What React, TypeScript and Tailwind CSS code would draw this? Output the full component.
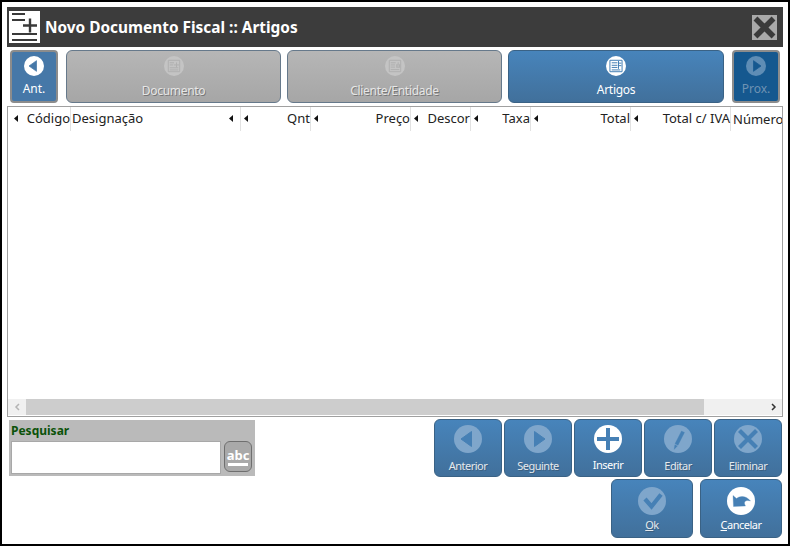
import type { ReactNode } from 'react'

const font = 'font-["Noto_Sans","Liberation_Sans",sans-serif]'

const columns = [
  { label: 'Código', width: 'w-[60px]' },
  { label: 'Designação', width: 'w-[170px]', left: true },
  { label: 'Qnt', width: 'w-[70px]' },
  { label: 'Preço', width: 'w-[100px]' },
  { label: 'Descor', width: 'w-[60px]' },
  { label: 'Taxa', width: 'w-[60px]' },
  { label: 'Total', width: 'w-[100px]' },
  { label: 'Total c/ IVA', width: 'w-[100px]' },
]

function Arrow({ className = '' }: { className?: string }) {
  return (
    <svg width="4" height="7" viewBox="0 0 4 7" className={`shrink-0 ${className}`}>
      <path d="M4 0v7L0 3.5z" fill="#111" />
    </svg>
  )
}

function Round({ size, fg, bg, children }: { size: number; fg: string; bg: string; children: ReactNode }) {
  return (
    <svg width={size} height={size} viewBox="0 0 28 28" className="shrink-0">
      <circle cx="14" cy="14" r="14" fill={fg} />
      <g fill={bg} stroke={bg}>{children}</g>
    </svg>
  )
}

const prev = <path d="M17.5 6.5v15L7 14z" strokeWidth="1" strokeLinejoin="round" />
const next = <path d="M10.5 6.5v15L21 14z" strokeWidth="1" strokeLinejoin="round" />
const plus = <path d="M14 3v22M3 14h22" strokeWidth="4" fill="none" />
const pencil = (
  <g>
    <path d="M17.500 6l3 1.400-6.500 12.800-3-1.400z" strokeWidth="0.3" />
    <path d="M10.800 19.800l2.600 1.200-3.300 3.500z" strokeWidth="0.2" />
  </g>
)
const cross = <path d="M5.500 5.500l17 17M22.500 5.500l-17 17" strokeWidth="4.200" fill="none" />
const check = <path d="M7 12l6.500 7.500L23 7.500" strokeWidth="4.200" fill="none" />
const undo = (
  <g>
    <path d="M6 8.500l3.500 3C13 8.500 19 8.500 23.500 14c-1.500-.5-4-1-5.500.5-1 1-.5 3 .5 4.500L6.500 19.500z" strokeWidth="0.3" />
  </g>
)
const doc = (
  <g fill="none" strokeWidth="1.400">
    <path d="M6 6h16v16H6z" />
    <path d="M8 9.500h6M8 12.500h5M8 16.500h12M8 19.500h12M14 12.500h7M17.500 9v7" />
  </g>
)
const client = (
  <g fill="none" strokeWidth="1.400">
    <path d="M6 6h16v16H6z" />
    <path d="M8 9.500h7M8 12.500h6M8 15.500h6M8 19h12" />
    <path d="M16.500 15.500v-3h4v3zM17.500 10h2" strokeWidth="1.600" />
  </g>
)
const article = (
  <g fill="none" strokeWidth="1.400">
    <path d="M5.500 6h17v16h-17z" />
    <path d="M8 9.500h8M8 13h8M8 16h8M8 19.500h12M17.500 7v11M17.500 10h4M17.500 13.500h4" />
  </g>
)

function ActionButton({ label, icon, on, wide, hotkey }: { label: string; icon: ReactNode; on?: boolean; wide?: boolean; hotkey?: boolean }) {
  return (
    <button
      className={`flex h-full flex-col items-center rounded-[6px] border border-[#3a6285] bg-gradient-to-b from-[#4784bb] to-[#41709b] ${wide ? 'w-[82px] pt-[7px]' : 'w-[68px] pt-[5px]'}`}
    >
      <Round size={28} fg={on ? '#fff' : '#7fa6cb'} bg="#4680b5">{icon}</Round>
      <span
        className={`text-[11px] leading-[15px] tracking-[-0.5px] ${on ? 'text-white' : 'text-[#e4e9ee] [text-shadow:1px_1px_0_#3b5f80]'} ${wide ? 'mt-[2px]' : on ? 'mt-[4px]' : 'mt-[5px]'}`}
      >
        {hotkey ? (
          <>
            <span className="underline">{label[0]}</span>
            {label.slice(1)}
          </>
        ) : (
          label
        )}
      </span>
    </button>
  )
}

function StepButton({ label, icon, active }: { label: string; icon: ReactNode; active?: boolean }) {
  return (
    <button
      className={`flex h-full flex-col items-center rounded-[6px] border pt-[5px] ${
        active
          ? 'flex-1 border-[#3a6285] bg-gradient-to-b from-[#4784bb] to-[#41709b]'
          : 'w-[215px] border-[#66798b] bg-gradient-to-b from-[#b6b6b6] to-[#a6a6a6]'
      }`}
    >
      <Round size={20} fg={active ? '#fff' : '#c4c4c4'} bg={active ? '#4680b5' : '#b0b0b0'}>{icon}</Round>
      <span
        className={`text-[12px] leading-[16px] tracking-[-0.3px] ${active ? 'mt-[6px] text-white' : 'mt-[7px] text-[#e6e6e6] [text-shadow:1px_1px_0_#777]'}`}
      >
        {label}
      </span>
    </button>
  )
}

function SideButton({ label, icon, dim }: { label: string; icon: ReactNode; dim?: boolean }) {
  return (
    <button
      className={`flex h-full w-[48px] shrink-0 flex-col items-center rounded-[4px] border-2 border-[#8c8c8c] pt-[4px] ${dim ? 'bg-[#15588f]' : 'bg-[#4678a8]'}`}
    >
      <Round size={20} fg={dim ? '#5f8db5' : '#fff'} bg={dim ? '#15588f' : '#4678a8'}>{icon}</Round>
      <span className={`mt-[5px] text-[12px] leading-[16px] ${dim ? 'text-[#6f93b3]' : 'text-white'}`}>{label}</span>
    </button>
  )
}

export default function App() {
  return (
    <div className={`box-border flex h-[546px] w-[790px] flex-col overflow-hidden border-2 border-black bg-white px-[5px] pt-[5px] ${font}`}>
      <header className="flex h-[40px] shrink-0 items-center bg-[#3c3c3c] pl-[2px] pr-[6px]">
        <svg width="31" height="32" viewBox="0 0 31 32" className="shrink-0">
          <rect width="31" height="32" fill="#fff" />
          <path d="M3 3h13M3 9h13M3 23h25M3 29h25" stroke="#3a3a3a" strokeWidth="2" />
          <path d="M21 7.500v14M14 14.500h14" stroke="#3a3a3a" strokeWidth="2.400" />
        </svg>
        <h1 className="ml-[5px] translate-y-[1px] text-[15.400px] font-bold text-white">Novo Documento Fiscal :: Artigos</h1>
        <div className="ml-auto flex h-[25px] w-[25px] items-center justify-center bg-[#a9a9a9]">
          <svg width="25" height="25" viewBox="0 0 25 25">
            <path d="M3.500 3.500l18 18M21.500 3.500l-18 18" stroke="#3a3a3a" strokeWidth="5.500" />
          </svg>
        </div>
      </header>

      <nav className="mt-[3px] flex h-[53px] shrink-0 items-stretch pl-[3px] pr-[3px]">
        <SideButton label="Ant." icon={prev} />
        <div className="mx-[8px] flex flex-1 gap-[6px]">
          <StepButton label="Documento" icon={doc} />
          <StepButton label="Cliente/Entidade" icon={client} />
          <StepButton label="Artigos" icon={article} active />
        </div>
        <SideButton label="Prox." icon={next} dim />
      </nav>

      <section className="mt-[3px] flex h-[311px] shrink-0 flex-col border border-[#a0a0a0]">
        <div className="flex h-[24px] shrink-0 items-stretch overflow-hidden pl-[3px] text-[13px] text-[#222]">
          {columns.map((c) => (
            <div key={c.label} className={`flex shrink-0 items-center border-r border-[#e2e2e2] pl-[3px] ${c.width}`}>
              {c.left ? (
                <>
                  <span className="-ml-[2px] whitespace-nowrap">{c.label}</span>
                  <Arrow className="ml-auto mr-[7px] -translate-y-[1px]" />
                </>
              ) : (
                <>
                  <Arrow className="-translate-y-[1px]" />
                  <span className="ml-auto whitespace-nowrap">{c.label}</span>
                </>
              )}
            </div>
          ))}
          <div className="pl-[2px] leading-[24px] whitespace-nowrap">Número</div>
        </div>
        <div className="flex-1" />
        <div className="mb-[1px] flex h-[16px] shrink-0 items-stretch bg-[#f0f0f0]">
          <div className="flex w-[18px] items-center justify-center">
            <svg width="7" height="8" viewBox="0 0 7 8"><path d="M5 1L2 4l3 3" fill="none" stroke="#b4b4b4" strokeWidth="1.500" /></svg>
          </div>
          <div className="w-[678px] bg-[#cdcdcd]" />
          <div className="ml-auto flex w-[18px] items-center justify-center">
            <svg width="7" height="8" viewBox="0 0 7 8"><path d="M2 1l3 3-3 3" fill="none" stroke="#333" strokeWidth="1.500" /></svg>
          </div>
        </div>
      </section>

      <div className="mt-[2px] flex flex-1 items-start justify-between pr-[1px]">
        <div className="ml-[2px] mt-[1px] flex h-[56px] w-[246px] flex-col bg-[#bababa] px-[2px]">
          <span className="text-[12px] font-bold leading-[21px] text-[#0b5209]">Pesquisar</span>
          <div className="flex items-start gap-[3px]">
            <input className="h-[33px] w-[210px] border border-[#a8a8a8] bg-white" />
            <div className="flex h-[31px] w-[28px] flex-col items-center justify-center rounded-[6px] border border-[#6f6f6f] bg-[#a9a9a9] pt-[1px] text-[13px] font-bold leading-[14px] text-white">
              abc
              <div className="mt-[1px] h-[3px] w-[20px] bg-white" />
            </div>
          </div>
        </div>
        <div className="flex flex-col items-end gap-[2px]">
          <div className="flex h-[58px] gap-[2px]">
            <ActionButton label="Anterior" icon={prev} />
            <ActionButton label="Seguinte" icon={next} />
            <ActionButton label="Inserir" icon={plus} on />
            <ActionButton label="Editar" icon={pencil} />
            <ActionButton label="Eliminar" icon={cross} />
          </div>
          <div className="flex h-[59px] gap-[7px]">
            <ActionButton label="Ok" icon={check} wide hotkey />
            <ActionButton label="Cancelar" icon={undo} on wide hotkey />
          </div>
        </div>
      </div>
    </div>
  )
}
